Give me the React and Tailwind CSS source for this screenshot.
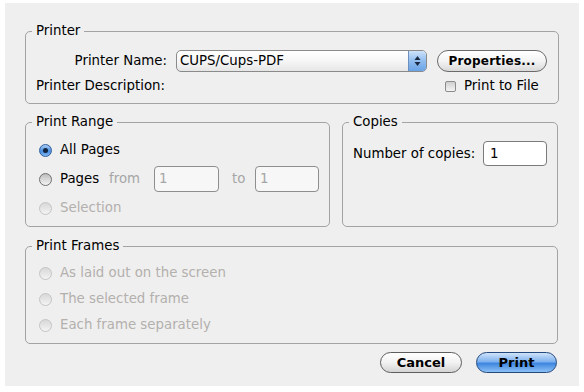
import React from "react";

function Radio({ state }) {
  if (state === "on") {
    return (
      <span className="flex h-[13px] w-[13px] items-center justify-center rounded-full border border-[#2f5f9e] bg-[linear-gradient(180deg,#a9cdf5_0%,#4a8ee0_55%,#7fb6f0_100%)]">
        <span className="h-[5px] w-[5px] rounded-full bg-[#10233f]" />
      </span>
    );
  }
  if (state === "off") {
    return (
      <span className="h-[13px] w-[13px] rounded-full border border-[#707070] bg-[linear-gradient(180deg,#bdbdbd_0%,#dedede_60%,#f4f4f4_100%)]" />
    );
  }
  return (
    <span className="h-[13px] w-[13px] rounded-full border border-[#c4c4c4] bg-[linear-gradient(180deg,#d8d8d8_0%,#e8e8e8_60%,#f4f4f4_100%)]" />
  );
}

function Group({ title, className, children }) {
  return (
    <fieldset className={"rounded-[5px] border border-[#a3a3a3] px-[10px] " + className}>
      <legend className="-ml-1 px-1 h-[16px] leading-[16px] text-[13.33px] text-black">{title}</legend>
      {children}
    </fieldset>
  );
}

function RadioRow({ state, label }) {
  const color = state === "disabled" ? "text-[#b3b0ad]" : "text-black";
  return (
    <div className="flex h-[20px] items-center pl-[3px]">
      <Radio state={state} />
      <span className={"ml-[8px] text-[13.33px] " + color}>{label}</span>
    </div>
  );
}

export default function App() {
  return (
    <div className="h-[392px] w-[584px] bg-white pl-[5px] pt-[3px] font-['DejaVu_Sans',sans-serif]">
      <div className="h-[383px] w-[574px] bg-[#efefef] px-[20px] pt-[20px]">
        {/* Printer */}
        <Group title="Printer" className="w-[533px] pt-[11px] pb-[9px]">
          <div className="grid grid-cols-[131px_1fr_auto] items-center gap-y-[6px]">
            <span className="text-right text-[13.33px] text-black">Printer Name:</span>
            <div className="ml-[9px] flex h-[22px] w-[251px] items-stretch overflow-hidden rounded-[5px] border border-[#8a8a8a] bg-[linear-gradient(180deg,#ffffff_0%,#f6f6f6_50%,#e6e6e6_100%)]">
              <span className="flex-1 pl-[3px] text-[13.33px] leading-[20px] text-black">CUPS/Cups-PDF</span>
              <span className="flex w-[18px] items-center justify-center border-l border-[#6d8fbd] bg-[linear-gradient(180deg,#cfe2f8_0%,#8fbcef_50%,#6aa3e6_100%)]">
                <svg width="7" height="12" viewBox="0 0 7 12">
                  <path d="M3.5 1 L6.5 5 L0.5 5 Z" fill="#1b2a40" />
                  <path d="M3.5 11 L6.5 7 L0.5 7 Z" fill="#1b2a40" />
                </svg>
              </span>
            </div>
            <button className="ml-[10px] mr-[1px] h-[22px] w-[110px] rounded-full border border-[#6b6b6b] bg-[linear-gradient(180deg,#ffffff_0%,#f4f4f4_50%,#d9d9d9_100%)] text-[12px] font-bold tracking-[0.2px] text-black">
              Properties...
            </button>
            <span className="h-[16px] whitespace-nowrap text-[13.33px] leading-[16px] text-black">Printer Description:</span>
            <span />
            <div className="flex items-center justify-end pr-[7px]">
              <span className="h-[11px] w-[11px] rounded-[2px] border border-[#8c8c8c] bg-[linear-gradient(180deg,#d0d0d0,#f4f4f4)]" />
              <span className="ml-[8px] w-[77px] text-[13.33px] leading-[16px] text-black">Print to File</span>
            </div>
          </div>
        </Group>

        <div className="mt-[10px] flex w-[533px] gap-[12px]">
          {/* Print Range */}
          <Group title="Print Range" className="w-[304px] pt-[10px] pb-[8px]">
            <div className="flex flex-col gap-[6px]">
              <RadioRow state="on" label="All Pages" />
              <div className="flex h-[26px] items-center pl-[3px]">
                <Radio state="off" />
                <span className="ml-[8px] w-[40px] text-[13.33px] text-black">Pages</span>
                <span className="ml-[9px] w-[34px] text-[13.33px] text-[#a6a6a6]">from</span>
                <span className="ml-[11px] flex h-[26px] w-[65px] items-center rounded-[4px] border border-[#8e8e8e] bg-[#f7f7f7] pl-[4px] text-[13.33px] text-[#a6a6a6]">1</span>
                <span className="ml-[13px] w-[13px] text-[13.33px] text-[#a6a6a6]">to</span>
                <span className="ml-[10px] flex h-[26px] w-[64px] items-center rounded-[4px] border border-[#8e8e8e] bg-[#f7f7f7] pl-[4px] text-[13.33px] text-[#a6a6a6]">1</span>
              </div>
              <RadioRow state="disabled" label="Selection" />
            </div>
          </Group>

          {/* Copies */}
          <Group title="Copies" className="w-[217px] pt-[11px] pb-[8px]">
            <div className="flex h-[25px] items-center justify-between">
              <span className="text-[13.33px] text-black">Number of copies:</span>
              <span className="flex h-[25px] w-[64px] items-center rounded-[4px] border border-[#7a7a7a] bg-white pl-[6px] text-[13.33px] text-black">1</span>
            </div>
          </Group>
        </div>

        {/* Print Frames */}
        <Group title="Print Frames" className="mt-[11px] w-[533px] pt-[9px] pb-[8px]">
          <div className="flex flex-col gap-[6px]">
            <RadioRow state="disabled" label="As laid out on the screen" />
            <RadioRow state="disabled" label="The selected frame" />
            <RadioRow state="disabled" label="Each frame separately" />
          </div>
        </Group>

        <div className="mt-[8px] flex w-[533px] justify-end gap-[14px] pr-[1px]">
          <button className="h-[21px] w-[82px] rounded-full border border-[#5e5e5e] bg-[linear-gradient(180deg,#ffffff_0%,#f2f2f2_50%,#d4d4d4_100%)] text-[13px] font-bold leading-[19px] text-black">
            Cancel
          </button>
          <button className="h-[21px] w-[81px] rounded-full border border-[#24497d] bg-[linear-gradient(180deg,#cfe3fa_0%,#7fb2ee_45%,#3f86e0_55%,#8cc0f5_100%)] text-[13px] font-bold leading-[19px] text-black">
            Print
          </button>
        </div>
      </div>
    </div>
  );
}
